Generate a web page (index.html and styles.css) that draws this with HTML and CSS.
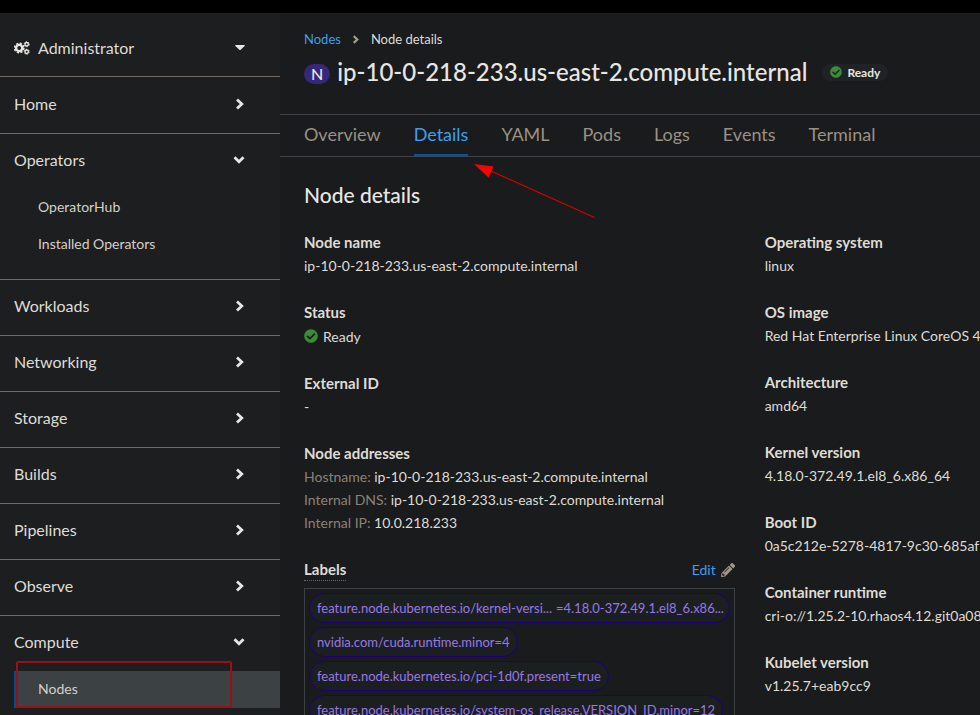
FILE: index.html
```
<!DOCTYPE html>
<html lang="en">
<head>
<meta charset="utf-8">
<title>ip-10-0-218-233.us-east-2.compute.internal · Details</title>
<link rel="stylesheet" href="styles.css">
</head>
<body>
<svg class="sprite" aria-hidden="true">
  <symbol id="right" viewBox="0 0 10 12"><path d="M2 1.500 6.800 6 2 10.500" fill="none" stroke="currentColor" stroke-width="2.800"/></symbol>
  <symbol id="down" viewBox="0 0 12 10"><path d="M1.500 2.200 6 6.700 10.500 2.200" fill="none" stroke="currentColor" stroke-width="2.800"/></symbol>
  <symbol id="check" viewBox="0 0 512 512"><path fill="currentColor" d="M504 256c0 137-111 248-248 248S8 393 8 256 119 8 256 8s248 111 248 248zM227.300 387.300l184-184c6.200-6.200 6.200-16.400 0-22.600l-22.600-22.600c-6.200-6.200-16.400-6.200-22.600 0L216 308.100l-70.100-70.100c-6.200-6.200-16.400-6.200-22.600 0l-22.600 22.600c-6.200 6.200-6.200 16.400 0 22.600l104 104c6.200 6.300 16.400 6.300 22.600.1z"/></symbol>
</svg>
<div class="masthead"></div>
<div class="page">
  <nav class="sidebar" aria-label="Main">
    <button class="perspective" type="button">
      <svg class="cogs" viewBox="0 0 17 14" aria-hidden="true">
        <circle cx="5.500" cy="7" r="3.300" fill="none" stroke="currentColor" stroke-width="2.600"/>
        <circle cx="5.500" cy="7" r="4.900" fill="none" stroke="currentColor" stroke-width="1.800" stroke-dasharray="2.300 1.548"/>
        <circle cx="13.500" cy="3" r="1.800" fill="none" stroke="currentColor" stroke-width="1.500"/>
        <circle cx="13.500" cy="3" r="2.700" fill="none" stroke="currentColor" stroke-width="1" stroke-dasharray="1.500 1.327"/>
        <circle cx="13.500" cy="11" r="1.800" fill="none" stroke="currentColor" stroke-width="1.500"/>
        <circle cx="13.500" cy="11" r="2.700" fill="none" stroke="currentColor" stroke-width="1" stroke-dasharray="1.500 1.327"/>
      </svg>
      <span>Administrator</span>
      <svg class="caret" viewBox="0 0 10 5" aria-hidden="true"><path d="M.6 0h8.800q.8.200.2.900L5.700 4.700q-.7.500-1.400 0L.4.900Q-.2.200.6 0z" fill="currentColor"/></svg>
    </button>
    <ul class="nav">
      <li><button type="button">Home<svg class="right"><use href="#right"/></svg></button></li>
      <li class="open"><button type="button" aria-expanded="true">Operators<svg class="down"><use href="#down"/></svg></button>
        <ul><li><a href="#">OperatorHub</a></li><li><a href="#">Installed Operators</a></li></ul></li>
      <li><button type="button">Workloads<svg class="right"><use href="#right"/></svg></button></li>
      <li><button type="button">Networking<svg class="right"><use href="#right"/></svg></button></li>
      <li><button type="button">Storage<svg class="right"><use href="#right"/></svg></button></li>
      <li><button type="button">Builds<svg class="right"><use href="#right"/></svg></button></li>
      <li><button type="button">Pipelines<svg class="right"><use href="#right"/></svg></button></li>
      <li><button type="button">Observe<svg class="right"><use href="#right"/></svg></button></li>
      <li class="open"><button type="button" aria-expanded="true">Compute<svg class="down"><use href="#down"/></svg></button>
        <ul><li><a class="current" href="#" aria-current="page">Nodes</a></li></ul></li>
    </ul>
  </nav>
  <main>
    <header>
      <nav class="crumbs" aria-label="Breadcrumb">
        <a href="#">Nodes</a><svg class="sep"><use href="#right"/></svg><span>Node details</span>
      </nav>
      <h1><span class="kind">N</span><span>ip-10-0-218-233.us-east-2.compute.internal</span><span class="pill"><svg class="ok"><use href="#check"/></svg>Ready</span></h1>
    </header>
    <nav class="tabs" aria-label="Node sections">
      <a href="#">Overview</a><a class="active" href="#">Details</a><a href="#">YAML</a><a href="#">Pods</a><a href="#">Logs</a><a href="#">Events</a><a href="#">Terminal</a>
    </nav>
    <section>
      <h2>Node details</h2>
      <div class="columns">
        <dl>
          <div><dt>Node name</dt><dd>ip-10-0-218-233.us-east-2.compute.internal</dd></div>
          <div><dt>Status</dt><dd class="status"><svg class="ok"><use href="#check"/></svg>Ready</dd></div>
          <div><dt>External ID</dt><dd>-</dd></div>
          <div><dt>Node addresses</dt>
            <dd><span class="muted">Hostname:</span> ip-10-0-218-233.us-east-2.compute.internal</dd>
            <dd><span class="muted">Internal DNS:</span> ip-10-0-218-233.us-east-2.compute.internal</dd>
            <dd><span class="muted">Internal IP:</span> 10.0.218.233</dd></div>
          <div><dt class="labels"><span class="hint">Labels</span><button class="edit" type="button">Edit
            <svg class="pencil" viewBox="0 0 512 512" aria-hidden="true"><path fill="currentColor" fill-rule="evenodd" d="M498 142l-46 46c-5 5-13 5-17 0L324 77c-5-5-5-12 0-17l46-46c19-19 49-19 68 0l60 60c19 19 19 49 0 68zM284 100 22 362 0 484c-3 16 12 30 28 28l122-22 262-262c5-5 5-13 0-17L301 100c-4-5-12-5-17 0zM124 340c-5-6-5-14 0-20l154-154c6-5 14-5 20 0s5 14 0 20L144 340c-6 5-14 5-20 0zm-36 84h48v36l-65 12-31-31 12-65h36z"/></svg></button></dt>
            <dd class="chips">
              <a href="#"><span>feature.node.kubernetes.io/kernel-versi...</span><span class="value">=4.18.0-372.49.1.el8_6.x86...</span></a>
              <a href="#">nvidia.com/cuda.runtime.minor=4</a>
              <a href="#">feature.node.kubernetes.io/pci-1d0f.present=true</a>
              <a href="#">feature.node.kubernetes.io/system-os_release.VERSION_ID.minor=12</a>
            </dd></div>
        </dl>
        <dl>
          <div><dt>Operating system</dt><dd>linux</dd></div>
          <div><dt>OS image</dt><dd>Red Hat Enterprise Linux CoreOS 4</dd></div>
          <div><dt>Architecture</dt><dd>amd64</dd></div>
          <div><dt>Kernel version</dt><dd>4.18.0-372.49.1.el8_6.x86_64</dd></div>
          <div><dt>Boot ID</dt><dd>0a5c212e-5278-4817-9c30-685af</dd></div>
          <div><dt>Container runtime</dt><dd>cri-o://1.25.2-10.rhaos4.12.git0a083</dd></div>
          <div><dt>Kubelet version</dt><dd>v1.25.7+eab9cc9</dd></div>
        </dl>
      </div>
    </section>
  </main>
</div>
<svg class="arrow" viewBox="0 0 122 54" aria-hidden="true"><path d="M17 7 120.500 53.500" stroke="#d80000" stroke-width="1.200"/><path d="M0 0 19.500 2.500 14.500 13.500z" fill="#f00"/></svg>
<div class="marker"></div>
</body>
</html>
```
FILE: styles.css
```
* { box-sizing: border-box; }
body {
  margin: 0;
  height: 100vh;
  overflow: hidden;
  display: flex;
  flex-direction: column;
  position: relative;
  background: #191b1c;
  color: #dfdcd6;
  font: 14px/23px Lato, "Liberation Sans", sans-serif;
}
ul, dl, dd, h1, h2 { margin: 0; padding: 0; list-style: none; }
a { color: #3f9fee; text-decoration: none; }
button { border: 0; padding: 0; background: none; color: inherit; font: inherit; text-align: left; }
.sprite { position: absolute; width: 0; height: 0; }
.masthead { flex: none; height: 13px; background: #000; }
.page { flex: 1; display: flex; min-height: 0; }

.sidebar { flex: none; width: 280px; background: #1c1e1f; font-size: 16px; }
.perspective {
  display: flex;
  align-items: center;
  gap: 8px;
  width: 100%;
  height: 64px;
  padding: 6px 35px 0 14px;
  border-bottom: 1px solid #756a62;
}
.cogs { width: 16px; height: 14px; color: #e8e6e3; }
.caret { width: 10px; height: 5px; margin-left: auto; color: #e8e6e3; }
.nav { padding-top: 1px; }
.nav > li { border-bottom: 1px solid #756a62; }
.nav > .open { padding-bottom: 16px; }
.nav button {
  display: flex;
  align-items: center;
  justify-content: space-between;
  width: 100%;
  height: 55px;
  padding: 0 35px 4px 14px;
}
.right { width: 10px; height: 12px; color: #e8e6e3; }
.down { width: 12px; height: 10px; color: #e8e6e3; }
.nav ul a {
  display: block;
  height: 37px;
  margin-left: 14px;
  padding: 6px 0 0 24px;
  color: #d4d0c9;
  font-size: 14px;
}
.nav ul .current { padding-left: 20px; border-left: 4px solid #00508f; background: #3c4143; }

main { flex: 1; min-width: 0; overflow: hidden; }
header { padding: 15px 24px 0; height: 101px; }
.crumbs { display: flex; align-items: center; font-size: 13px; }
.sep { width: 8px; height: 9px; margin: 0 11px; color: #a79e92; }
h1 {
  display: flex;
  align-items: center;
  gap: 7px;
  margin-top: 5px;
  color: #e8e6e3;
  font-size: 24px;
  font-weight: 500;
  line-height: 32px;
  white-space: nowrap;
}
.kind { margin-top: 4px; padding: 0 7px; border-radius: 10px; background: #35277a; font-size: 16px; line-height: 20px; }
.pill {
  display: flex;
  align-items: center;
  gap: 5px;
  margin-left: 8px;
  padding: 0 8px;
  border-radius: 9px;
  background: #202325;
  font-size: 12px;
  font-weight: 700;
  line-height: 17px;
}
.ok { width: 14px; height: 14px; color: #3d8b37; }
.pill .ok { width: 12px; height: 12px; }
.tabs {
  display: flex;
  gap: 33px;
  padding: 0 24px;
  border: solid #414446;
  border-width: 1px 0;
  font-size: 18px;
  line-height: 39px;
}
.tabs a { height: 41px; color: #9b9184; }
.tabs .active { color: #3f9fee; box-shadow: inset 0 -2px #0054a0; }

section { padding: 24px 0 0 24px; }
h2 { color: #e8e6e3; font-size: 21px; font-weight: 500; line-height: 28px; }
.columns { display: grid; grid-template-columns: minmax(0, 2fr) minmax(0, 1fr); gap: 30px; margin-top: 22px; white-space: nowrap; }
dl { display: flex; flex-direction: column; gap: 24px; }
dt { font-size: 15px; font-weight: 700; }
.status { display: flex; align-items: center; gap: 5px; height: 24px; }
.muted { color: #8b8277; }
.labels { display: flex; justify-content: space-between; align-items: center; }
.hint { border-bottom: 1px dotted #666; line-height: 21px; }
.edit { display: flex; align-items: center; gap: 5px; color: #3f9fee; font-size: 14px; font-weight: 400; }
.pencil { width: 14px; height: 14px; color: #a0978b; }
.chips {
  display: flex;
  flex-direction: column;
  align-items: flex-start;
  gap: 4px;
  margin-top: 7px;
  padding: 4px;
  border: 1px solid #3c4143;
}
.chips a {
  display: flex;
  max-width: 100%;
  padding: 3px 7px;
  border: 1px solid #1c0078;
  border-radius: 15px;
  background: #1b1f20;
  color: #9a77e6;
  font-size: 13px;
  line-height: 22px;
}
.value { padding-left: 4px; }

.arrow { position: absolute; left: 474px; top: 164px; width: 122px; height: 54px; }
.marker { position: absolute; left: 16px; top: 661px; width: 216px; height: 47px; border: 2px solid #9c1015; border-radius: 2px; }
```
